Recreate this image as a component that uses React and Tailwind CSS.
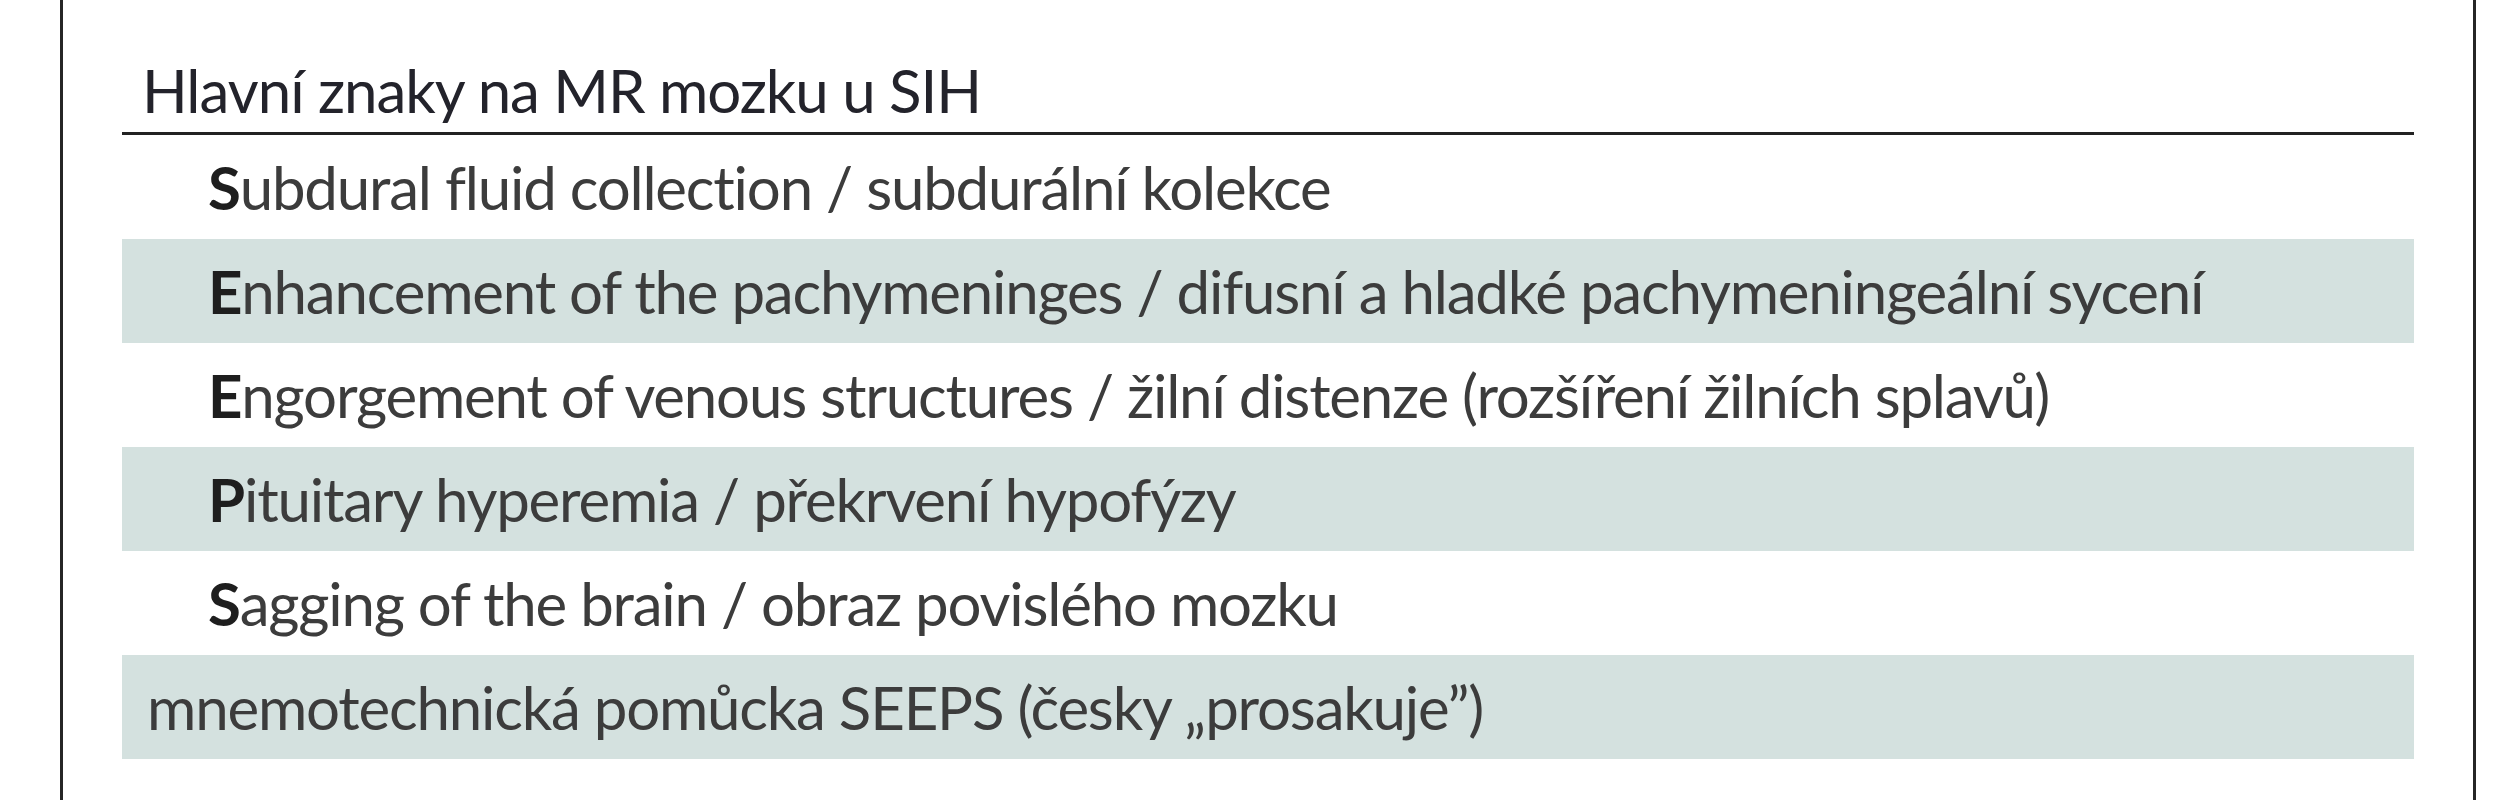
export default function App() {
  const rows = [
    { first: 'S', rest: 'ubdural fluid collection / subdurální kolekce', shaded: false },
    { first: 'E', rest: 'nhancement of the pachymeninges / difusní a hladké pachymeningeální sycení', shaded: true },
    { first: 'E', rest: 'ngorgement of venous structures / žilní distenze (rozšíření žilních splavů)', shaded: false },
    { first: 'P', rest: 'ituitary hyperemia / překrvení hypofýzy', shaded: true },
    { first: 'S', rest: 'agging of the brain / obraz povislého mozku', shaded: false },
  ];

  return (
    <div className="w-full h-[800px] bg-white overflow-hidden" style={{ fontFamily: 'Lato, "Open Sans", sans-serif' }}>
      <div className="ml-[60px] w-[2416px] h-[800px] border-x-[3px] border-[#262626] px-[59px]">
        {/* table head */}
        <div className="pt-[54px] pb-[6px] pl-[20px] leading-[72px] text-[60px] tracking-[-1px] text-[#23232b] border-b-[3px] border-[#222222]">
          Hlavní znaky na MR mozku u SIH
        </div>

        {/* SEEPS rows */}
        {rows.map((row, i) => (
          <div
            key={i}
            className={
              'h-[104px] pl-[86px] leading-[104px] text-[60px] tracking-[-1.2px] text-[#3c3c3c] whitespace-nowrap ' +
              (row.shaded ? 'bg-[#d4e1df]' : 'bg-white')
            }
          >
            <span className="font-bold text-[#1e1e1e]">{row.first}</span>
            {row.rest}
          </div>
        ))}

        <div className="h-[104px] pl-[25px] leading-[104px] text-[60px] tracking-[-1.2px] text-[#3c3c3c] bg-[#d4e1df] whitespace-nowrap">
          mnemotechnická pomůcka SEEPS (česky „prosakuje”)
        </div>
      </div>
    </div>
  );
}
